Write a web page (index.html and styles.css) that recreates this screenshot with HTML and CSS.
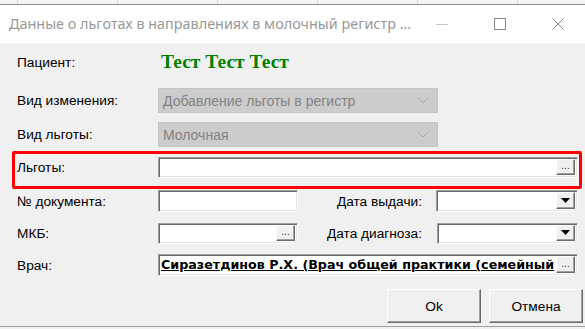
FILE: index.html
```html
<!DOCTYPE html>
<html lang="ru">
<head>
    <meta charset="UTF-8">
    <title>Данные о льготах</title>
    <link rel="stylesheet" href="styles.css">
</head>
<body>
    <div class="desk"></div>

    <div class="window">
        <div class="titlebar">
            <span class="title">Данные о льготах в направлениях в молочный регистр ...</span>
            <div class="controls">
                <span class="ctl">
                    <svg width="12" height="12" viewBox="0 0 12 12"><path d="M0 6.5h12" stroke="#c8c8c8" stroke-width="1"/></svg>
                </span>
                <span class="ctl">
                    <svg width="12" height="12" viewBox="0 0 12 12"><rect x="0.5" y="0.5" width="11" height="11" fill="none" stroke="#8a8a8a" stroke-width="1"/></svg>
                </span>
                <span class="ctl">
                    <svg width="12" height="12" viewBox="0 0 12 12"><path d="M0.5 0.5l11 11M11.5 0.5l-11 11" stroke="#8a8a8a" stroke-width="1"/></svg>
                </span>
            </div>
        </div>

        <div class="form">
            <div class="row row-patient">
                <span class="label">Пациент:</span>
                <span class="patient">Тест Тест Тест</span>
            </div>

            <div class="row row-combo first">
                <span class="label">Вид изменения:</span>
                <div class="combo">
                    <span>Добавление льготы в регистр</span>
                    <svg class="chev" width="12" height="7" viewBox="0 0 12 7"><path d="M0.5 0.5l5.5 5.5 5.5-5.5" fill="none" stroke="#a8a8a8" stroke-width="1"/></svg>
                </div>
            </div>

            <div class="row row-combo second">
                <span class="label">Вид льготы:</span>
                <div class="combo">
                    <span>Молочная</span>
                    <svg class="chev" width="12" height="7" viewBox="0 0 12 7"><path d="M0.5 0.5l5.5 5.5 5.5-5.5" fill="none" stroke="#a8a8a8" stroke-width="1"/></svg>
                </div>
            </div>

            <div class="highlight">
                <span class="label">Льготы:</span>
                <div class="field wide">
                    <span class="text"></span>
                    <span class="btn-small">...</span>
                </div>
            </div>

            <div class="row row-doc">
                <span class="label">№ документа:</span>
                <div class="field short"></div>
                <span class="label-right">Дата выдачи:</span>
                <div class="field date">
                    <span class="text"></span>
                    <span class="btn-small drop"><svg width="9" height="5" viewBox="0 0 9 5"><path d="M0 0h9L4.5 5z" fill="#000"/></svg></span>
                </div>
            </div>

            <div class="row row-mkb">
                <span class="label">МКБ:</span>
                <div class="field short">
                    <span class="text"></span>
                    <span class="btn-small">...</span>
                </div>
                <span class="label-right">Дата диагноза:</span>
                <div class="field date">
                    <span class="text"></span>
                    <span class="btn-small drop"><svg width="9" height="5" viewBox="0 0 9 5"><path d="M0 0h9L4.5 5z" fill="#000"/></svg></span>
                </div>
            </div>

            <div class="row row-doctor">
                <span class="label">Врач:</span>
                <div class="field wide">
                    <span class="text doctor">Сиразетдинов Р.Х. (Врач общей практики (семейный</span>
                    <span class="btn-small">...</span>
                </div>
            </div>

            <div class="buttons">
                <button class="btn">Ok</button>
                <button class="btn">Отмена</button>
            </div>

            <div class="bottom-line"></div>
        </div>
    </div>
</body>
</html>
```

FILE: styles.css
```css
html, body {
    margin: 0;
    padding: 0;
    width: 585px;
    height: 329px;
    overflow: hidden;
    background-color: #f0f0f0;
    font-family: 'Liberation Sans', Arial, sans-serif;
    font-size: 13.7px;
    color: #000;
}

/* strip of the window behind */
.desk {
    height: 4px;
    background-color: #f4f4f4;
    background-image: repeating-linear-gradient(90deg, transparent 0, transparent 17px, #d6d6d6 17px, #d6d6d6 18px, transparent 18px, transparent 100px);
}

.window {
    border-top: 1px solid #8c8c8c;
}

.titlebar {
    height: 38px;
    background-color: #fff;
    display: flex;
    align-items: center;
    padding-left: 9px;
}

.title {
    flex: 1;
    font-family: 'Noto Sans', sans-serif;
    font-size: 14.4px;
    color: #999;
    white-space: nowrap;
    padding-bottom: 1px;
}

.controls {
    display: flex;
    margin-right: -2px;
}

.ctl {
    width: 58px;
    height: 38px;
    display: flex;
    align-items: center;
    justify-content: center;
}

.form {
    display: flex;
    flex-direction: column;
}

.row {
    display: flex;
    align-items: center;
    padding-left: 17px;
    padding-right: 7px;
}

.label {
    width: 141px;
    flex-shrink: 0;
    white-space: nowrap;
}

.row-patient {
    height: 38px;
}

.patient {
    padding-left: 3px;
    font-family: 'Liberation Serif', 'Times New Roman', serif;
    font-weight: bold;
    font-size: 19.5px;
    color: #008000;
}

.row-combo {
    height: 25px;
}

.row-combo.first {
    margin-top: 7px;
}

.row-combo.second {
    margin-top: 9px;
}

.combo {
    width: 280px;
    height: 25px;
    box-sizing: border-box;
    background-color: #cccccc;
    border: 1px solid #c4c4c4;
    display: flex;
    align-items: center;
    padding-left: 4px;
    padding-right: 8px;
    color: #838383;
    font-size: 14px;
}

.combo span {
    flex: 1;
}

/* sunken edit box */
.field {
    box-sizing: border-box;
    background-color: #fff;
    border-top: 1px solid #a0a0a0;
    border-left: 1px solid #a0a0a0;
    border-bottom: 1px solid #fff;
    border-right: 1px solid #fff;
    box-shadow: inset 1px 1px 0 #696969, inset -1px -1px 0 #e3e3e3;
    display: flex;
    align-items: stretch;
    padding: 1px 2px 2px 1px;
    overflow: hidden;
}

.field .text {
    flex: 1;
    min-width: 0;
    display: flex;
    align-items: center;
    white-space: nowrap;
    overflow: hidden;
}

.field.wide {
    width: 420px;
    height: 22px;
}

.field.short {
    width: 140px;
    height: 22px;
}

.field.date {
    width: 142px;
    height: 22px;
}

.btn-small {
    width: 19px;
    flex-shrink: 0;
    box-sizing: border-box;
    background-color: #f0f0f0;
    border-top: 1px solid #fff;
    border-left: 1px solid #fff;
    border-right: 1px solid #696969;
    border-bottom: 1px solid #696969;
    box-shadow: inset -1px -1px 0 #a0a0a0;
    display: flex;
    align-items: flex-end;
    justify-content: center;
    font-size: 10px;
    line-height: 10px;
    color: #333;
    padding-bottom: 3px;
}

.btn-small.drop {
    align-items: center;
    padding-bottom: 1px;
}

.label-right {
    flex: 1;
    text-align: right;
    padding-right: 14px;
    white-space: nowrap;
}

.highlight {
    margin-top: 4px;
    margin-left: 12px;
    width: 570px;
    height: 38px;
    box-sizing: border-box;
    border: 3px solid #ff0000;
    border-radius: 2px;
    display: flex;
    align-items: flex-start;
    padding: 3px 1px 0 2px;
}

.highlight .label {
    line-height: 21px;
}

.highlight .field.wide {
    height: 21px;
}

.row-doc {
    margin-top: 1px;
    height: 22px;
}

.row-mkb {
    margin-top: 11px;
    height: 21px;
}

.row-mkb .field {
    height: 21px;
}

.row-mkb .label-right {
    padding-right: 15px;
}

.row-mkb .field.date {
    width: 141px;
}

.row-doctor {
    margin-top: 10px;
    height: 22px;
}

.doctor {
    font-family: 'DejaVu Sans', Verdana, sans-serif;
    font-weight: bold;
    font-size: 12.7px;
    text-decoration: underline;
    padding-left: 1px;
}

.buttons {
    margin-top: 13px;
    display: flex;
    justify-content: flex-end;
    gap: 8px;
    padding-right: 2px;
}

.btn {
    width: 94px;
    height: 34px;
    box-sizing: border-box;
    background-color: #f0f0f0;
    border-top: 1px solid #fff;
    border-left: 1px solid #fff;
    border-right: 1px solid #696969;
    border-bottom: 1px solid #696969;
    box-shadow: inset -1px -1px 0 #a0a0a0;
    font-family: 'Liberation Sans', Arial, sans-serif;
    font-size: 13.7px;
    color: #000;
    padding: 0;
}

.bottom-line {
    margin-top: 3px;
    border-top: 1px solid #a0a0a0;
}
```
